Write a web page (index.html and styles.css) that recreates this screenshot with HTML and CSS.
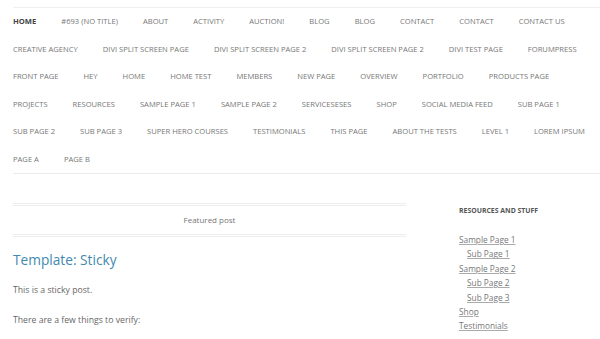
FILE: index.html
```html
<!DOCTYPE html>
<html lang="en">
<head>
<meta charset="utf-8">
<title>Template: Sticky</title>
<link rel="stylesheet" href="styles.css">
</head>
<body>
<div class="page">
  <nav class="menu">
    <ul class="menu-list">
      <li class="current"><a href="#">Home</a></li>
      <li><a href="#">#693 (no title)</a></li>
      <li><a href="#">About</a></li>
      <li><a href="#">Activity</a></li>
      <li><a href="#">Auction!</a></li>
      <li><a href="#">Blog</a></li>
      <li><a href="#">Blog</a></li>
      <li><a href="#">Contact</a></li>
      <li><a href="#">Contact</a></li>
      <li><a href="#">Contact Us</a></li>
      <li><a href="#">Creative Agency</a></li>
      <li><a href="#">Divi Split Screen Page</a></li>
      <li><a href="#">Divi Split Screen Page 2</a></li>
      <li><a href="#">Divi Split Screen Page 2</a></li>
      <li><a href="#">Divi Test Page</a></li>
      <li><a href="#">ForumPress</a></li>
      <li><a href="#">Front Page</a></li>
      <li><a href="#">Hey</a></li>
      <li><a href="#">Home</a></li>
      <li><a href="#">Home Test</a></li>
      <li><a href="#">Members</a></li>
      <li><a href="#">New Page</a></li>
      <li><a href="#">Overview</a></li>
      <li><a href="#">Portfolio</a></li>
      <li><a href="#">Products Page</a></li>
      <li><a href="#">Projects</a></li>
      <li><a href="#">Resources</a></li>
      <li><a href="#">Sample Page 1</a></li>
      <li><a href="#">Sample Page 2</a></li>
      <li><a href="#">Serviceseses</a></li>
      <li><a href="#">Shop</a></li>
      <li><a href="#">Social Media Feed</a></li>
      <li><a href="#">Sub Page 1</a></li>
      <li><a href="#">Sub Page 2</a></li>
      <li><a href="#">Sub Page 3</a></li>
      <li><a href="#">Super Hero Courses</a></li>
      <li><a href="#">Testimonials</a></li>
      <li><a href="#">This Page</a></li>
      <li><a href="#">About The Tests</a></li>
      <li><a href="#">Level 1</a></li>
      <li><a href="#">Lorem Ipsum</a></li>
      <li><a href="#">Page A</a></li>
      <li><a href="#">Page B</a></li>
    </ul>
  </nav>

  <div class="layout">
    <main class="content">
      <div class="featured">Featured post</div>
      <article class="post">
        <h1 class="post-title"><a href="#">Template: Sticky</a></h1>
        <p>This is a sticky post.</p>
        <p>There are a few things to verify:</p>
      </article>
    </main>
    <aside class="sidebar">
      <h2 class="widget-title">Resources and Stuff</h2>
      <ul class="widget-list">
        <li><a href="#">Sample Page 1</a></li>
        <li class="sub"><a href="#">Sub Page 1</a></li>
        <li><a href="#">Sample Page 2</a></li>
        <li class="sub"><a href="#">Sub Page 2</a></li>
        <li class="sub"><a href="#">Sub Page 3</a></li>
        <li><a href="#">Shop</a></li>
        <li><a href="#">Testimonials</a></li>
      </ul>
    </aside>
  </div>
</div>
</body>
</html>
```

FILE: styles.css
```css
html, body {
  margin: 0;
  padding: 0;
  background: #fff;
}

body {
  font-family: "Open Sans", "Liberation Sans", sans-serif;
  color: #666;
  overflow: hidden;
}

a {
  color: inherit;
  text-decoration: none;
}

.page {
  padding: 7px 0 0 13px;
}

.menu {
  border-top: 1px solid #f0f0f0;
  border-bottom: 1px solid #ebebeb;
}

.menu-list {
  list-style: none;
  margin: 0;
  padding: 0;
  display: flex;
  flex-wrap: wrap;
  column-gap: 25px;
}

.menu-list li {
  font-size: 7.6px;
  line-height: 27.5px;
  text-transform: uppercase;
  color: #777;
  white-space: nowrap;
}

.menu-list li.current {
  font-weight: 700;
  color: #444;
}

.layout {
  display: flex;
  gap: 53px;
  padding-top: 29px;
}

.content {
  width: 393px;
  flex: none;
}

.featured {
  border-top: 3px double #eeeeee;
  border-bottom: 3px double #eeeeee;
  text-align: center;
  font-size: 8px;
  color: #777;
  line-height: 28px;
}

.post-title {
  margin: 11px 0 0;
  font-size: 13.7px;
  font-weight: 400;
  line-height: 24px;
  color: #4289b0;
}

.post p {
  margin: 0;
  font-size: 8.7px;
  line-height: 14px;
  color: #666;
}

.post-title + p {
  margin-top: 11px;
}

.post p + p {
  margin-top: 16px;
}

.sidebar {
  flex: 1;
}

.widget-title {
  margin: 0;
  font-size: 6.9px;
  font-weight: 700;
  text-transform: uppercase;
  color: #555;
  line-height: 16px;
}

.widget-list {
  list-style: none;
  margin: 14px 0 0;
  padding: 0;
}

.widget-list li {
  font-size: 8.3px;
  line-height: 14.4px;
  color: #777;
}

.widget-list li a {
  text-decoration: underline;
  text-decoration-color: #aaa;
}

.widget-list li.sub {
  padding-left: 8px;
}
```
